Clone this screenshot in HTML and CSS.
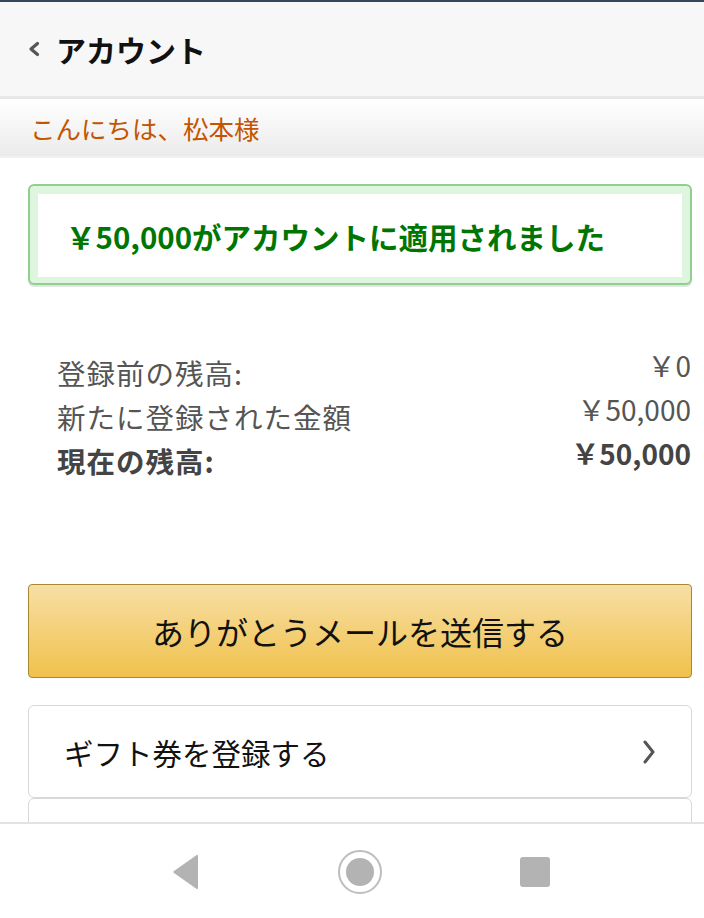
FILE: index.html
```html
<!DOCTYPE html>
<html lang="ja">
<head>
    <meta charset="UTF-8">
    <meta name="viewport" content="width=device-width, initial-scale=1.0">
    <title>アカウント</title>
    <link rel="stylesheet" href="styles.css">
</head>
<body>
    <div class="screen">
        <div class="status-strip"></div>
        <header class="topbar">
            <svg class="back" width="14" height="18" viewBox="0 0 14 18">
                <path d="M10.5 3.5 L4 9 L10.5 14.5" fill="none" stroke="#555" stroke-width="3.2" stroke-linecap="round" stroke-linejoin="round"/>
            </svg>
            <h1>アカウント</h1>
        </header>
        <div class="greeting">こんにちは、松本様</div>

        <main class="content">
            <div class="alert">
                <div class="alert-inner">￥50,000がアカウントに適用されました</div>
            </div>

            <div class="balance">
                <div class="balance-row">
                    <span class="label">登録前の残高:</span>
                    <span class="value">￥0</span>
                </div>
                <div class="balance-row">
                    <span class="label">新たに登録された金額</span>
                    <span class="value">￥50,000</span>
                </div>
                <div class="balance-row total">
                    <span class="label">現在の残高:</span>
                    <span class="value">￥50,000</span>
                </div>
            </div>

            <button class="thanks-btn">ありがとうメールを送信する</button>

            <div class="link-card">
                <span>ギフト券を登録する</span>
                <svg width="18" height="28" viewBox="0 0 18 28">
                    <path d="M5 4 L13 14 L5 24" fill="none" stroke="#555" stroke-width="3" stroke-linecap="round" stroke-linejoin="round"/>
                </svg>
            </div>
            <div class="link-card"></div>
        </main>

        <nav class="navbar">
            <svg width="30" height="36" viewBox="0 0 30 36">
                <path d="M27 2 L27 34 Q27 36 25 34.5 L3 19 Q1.5 18 3 17 L25 1.5 Q27 0 27 2 Z" fill="#b3b3b3"/>
            </svg>
            <svg width="46" height="46" viewBox="0 0 46 46">
                <circle cx="23" cy="23" r="21" fill="none" stroke="#bdbdbd" stroke-width="2"/>
                <circle cx="23" cy="23" r="14" fill="#b3b3b3"/>
            </svg>
            <svg width="32" height="32" viewBox="0 0 32 32">
                <rect x="1" y="1" width="30" height="30" rx="3" fill="#b3b3b3"/>
            </svg>
        </nav>
    </div>
</body>
</html>
```

FILE: styles.css
```css
body {
    margin: 0;
    font-family: "Noto Sans CJK JP", "Noto Sans", sans-serif;
    background: #fff;
}
.screen {
    width: 704px;
    height: 918px;
    display: flex;
    flex-direction: column;
    overflow: hidden;
}
.status-strip {
    height: 2px;
    background: #37475a;
}
.topbar {
    height: 97px;
    box-sizing: border-box;
    background: #f7f7f7;
    border-bottom: 3px solid #e7e7e7;
    display: flex;
    align-items: center;
    padding-left: 27px;
}
.topbar h1 {
    margin: 0 0 0 15px;
    font-size: 30px;
    font-weight: bold;
    color: #111;
}
.greeting {
    height: 59px;
    box-sizing: border-box;
    padding-left: 30px;
    display: flex;
    align-items: center;
    font-size: 25.5px;
    color: #c45500;
    background: linear-gradient(#ffffff, #ebebeb);
    border-bottom: 2px solid #f1f1f1;
}
.content {
    flex: 1;
    overflow: hidden;
    padding: 26px 12px 0 28px;
}
.alert {
    height: 101px;
    box-sizing: border-box;
    border: 2px solid #91cf91;
    border-radius: 6px;
    background: #def5de;
    padding: 8px 8px 6px 8px;
    box-shadow: 0 2px 0 #e4e4e4;
}
.alert-inner {
    height: 100%;
    background: #fff;
    display: flex;
    align-items: center;
    padding-left: 28px;
    font-size: 29.5px;
    font-weight: bold;
    color: #007600;
}
.balance {
    margin-top: 66px;
    padding: 0 1px 0 29px;
}
.balance-row {
    display: flex;
    justify-content: space-between;
    align-items: flex-start;
    height: 44px;
    color: #555;
}
.balance-row .label {
    font-size: 28.5px;
    line-height: 44px;
    letter-spacing: 1px;
}
.balance-row .value {
    font-size: 28px;
    line-height: 28px;
}
.balance-row.total {
    font-weight: bold;
    color: #444;
}
.thanks-btn {
    display: block;
    width: 100%;
    height: 94px;
    margin-top: 101px;
    border: 1px solid #a88734;
    border-radius: 4px;
    background: linear-gradient(#f7dfa5, #f0c14b);
    font-family: inherit;
    font-size: 32px;
    color: #111;
}
.link-card {
    height: 93px;
    box-sizing: border-box;
    border: 1px solid #d8d8d8;
    border-radius: 6px;
    display: flex;
    align-items: center;
    justify-content: space-between;
    padding: 0 33px 0 35px;
    font-size: 29.5px;
    color: #111;
}
.thanks-btn + .link-card {
    margin-top: 27px;
}
.navbar {
    height: 96px;
    flex-shrink: 0;
    box-sizing: border-box;
    border-top: 2px solid #e2e2e2;
    background: #fff;
    display: flex;
    align-items: center;
    justify-content: center;
    gap: 136px;
    padding: 2px 0 0 18px;
}
```
